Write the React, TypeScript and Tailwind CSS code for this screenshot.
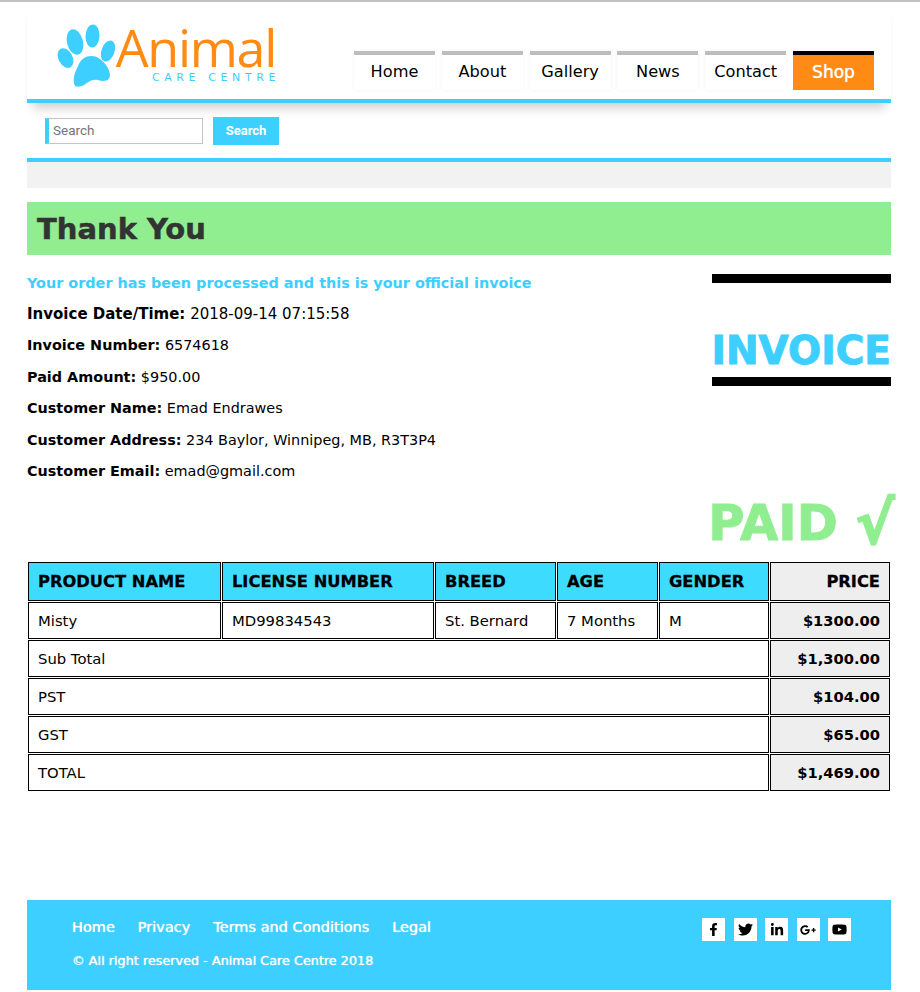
import { FaFacebookF, FaTwitter, FaLinkedinIn, FaGooglePlusG, FaYoutube } from "react-icons/fa";

const tabs = ["Home", "About", "Gallery", "News", "Contact"];
const info: [string, string][] = [
  ["Invoice Date/Time:", "2018-09-14 07:15:58"],
  ["Invoice Number:", "6574618"],
  ["Paid Amount:", "$950.00"],
  ["Customer Name:", "Emad Endrawes"],
  ["Customer Address:", "234 Baylor, Winnipeg, MB, R3T3P4"],
  ["Customer Email:", "emad@gmail.com"],
];
const heads = ["PRODUCT NAME", "LICENSE NUMBER", "BREED", "AGE", "GENDER"];
const item = ["Misty", "MD99834543", "St. Bernard", "7 Months", "M"];
const totals = [
  ["Sub Total", "$1,300.00"],
  ["PST", "$104.00"],
  ["GST", "$65.00"],
  ["TOTAL", "$1,469.00"],
];
const socials = [
  { I: FaFacebookF, s: 13 },
  { I: FaTwitter, s: 15 },
  { I: FaLinkedinIn, s: 14 },
  { I: FaGooglePlusG, s: 16 },
  { I: FaYoutube, s: 15 },
];

function Paw() {
  return (
    <svg width="63" height="66" viewBox="55 22 63 66" fill="#3dcfff" className="shrink-0">
      <ellipse cx="65.5" cy="57" rx="7" ry="10.5" transform="rotate(-28 65.5 57)" />
      <ellipse cx="75" cy="41" rx="8" ry="13" transform="rotate(-14 75 41)" />
      <ellipse cx="92.5" cy="35" rx="7" ry="11.5" transform="rotate(3 92.5 35)" />
      <ellipse cx="108" cy="50" rx="6.5" ry="11" transform="rotate(20 108 50)" />
      <path d="M75 85C72 78 75 71 78 65C81 58 85 55 92 55C100 55 110 66 110 74C110 80 104 81 98 79C90 78 88 82 84 84C80 86 77 86 75 85Z" />
    </svg>
  );
}

export default function App() {
  return (
    <div className="w-[920px] h-[992px] bg-white border-t-2 border-[#c2c2c2] font-['DejaVu_Sans',Verdana,sans-serif] text-[14.4px] text-black overflow-hidden">
      <div className="ml-[27px] w-[864px]">
        <header className="h-[101px] border-b-4 border-[#3dcfff] shadow-[0_11px_10px_-6px_rgba(0,0,0,0.2)] flex justify-between pl-[28px] pr-[17px] bg-white">
          <div className="flex pt-[21px] h-[90px]">
            <Paw />
            <div className="flex flex-col items-end -ml-[3px] w-[162px]">
              <span className="font-['Open_Sans',sans-serif] text-[52px] leading-[48px] tracking-[-1.3px] text-[#ff8a14] pr-[1px]">Animal</span>
              <span className="text-[11px] leading-[12px] tracking-[4.6px] text-[#3dcfff] mt-[1px] -mr-[3px]">CARE CENTRE</span>
            </div>
          </div>
          <nav className="flex gap-[6.8px] pt-[49px]">
            {tabs.map((t) => (
              <a key={t} className="w-[81px] h-[39px] border-t-4 border-[#bdbdbd] bg-white shadow-[0_0_4px_rgba(0,0,0,0.05)] flex items-center justify-center text-[16.2px]">{t}</a>
            ))}
            <a className="w-[81px] h-[39px] border-t-4 border-black bg-[#ff8a14] text-white [text-shadow:0_0_1px_white] flex items-center justify-center text-[17px]">Shop</a>
          </nav>
        </header>

        <div className="h-[59px] border-b-4 border-[#3dcfff] flex items-start gap-[10px] pl-[18px] pt-[14px] font-['Roboto',sans-serif] text-[13.5px]">
          <input
            placeholder="Search"
            className="w-[158px] h-[26px] mt-[1px] border border-[#c4c4c4] border-l-4 border-l-[#3dcfff] pl-[4px] pb-[2px] placeholder:text-[#757575] outline-none"
          />
          <button className="w-[66px] h-[28px] bg-[#3dcfff] text-white font-bold text-[13px]">Search</button>
        </div>

        <div className="h-[26px] bg-[#f2f2f2]" />

        <h1 className="mt-[14px] h-[53px] bg-[#90ee90] pl-[10px] pt-[2px] flex items-center text-[29px] leading-[55px] font-bold text-[#333] [-webkit-text-stroke:0.5px_#333]">Thank You</h1>

        <div className="flex justify-between">
          <div className="pt-[12px]">
            <p className="font-bold text-[#3dcfff] h-[31px] leading-[32px]">Your order has been processed and this is your official invoice</p>
            {info.map(([a, b], i) => (
              <p key={a} className={i === 0 ? "h-[31.4px] leading-[32px] text-[15px]" : "h-[31.4px] leading-[32px]"}><b>{a}</b> {b}</p>
            ))}
          </div>
          <div className="w-[179px] mt-[19px] h-[112px] border-y-[9px] border-black flex items-end justify-end">
            <span className="text-[39px] leading-[52px] font-bold text-[#3dcfff] whitespace-nowrap [-webkit-text-stroke:1px_#3dcfff]">INVOICE</span>
          </div>
        </div>

        <div className="flex justify-end items-center h-[75px] -mr-[3.5px] text-[#90ee90] font-bold whitespace-nowrap [-webkit-text-stroke:1px_#90ee90]">
          <span className="text-[49.5px] leading-[75px]">PAID</span>
          <span className="text-[58px] leading-[75px] ml-[18px] [-webkit-text-stroke:2px_#90ee90]">√</span>
        </div>

        <table className="w-[864px] table-fixed border-separate border-spacing-[1px]">
          <colgroup>
            <col className="w-[193px]" />
            <col className="w-[212px]" />
            <col className="w-[121px]" />
            <col className="w-[101px]" />
            <col className="w-[110px]" />
            <col />
          </colgroup>
          <thead>
            <tr className="h-[39px]">
              {heads.map((h) => (
                <th key={h} className="border border-black bg-[#3ddcff] text-left font-bold pl-[9px] text-[16.3px] whitespace-nowrap [-webkit-text-stroke:0.3px_black]">{h}</th>
              ))}
              <th className="border border-black bg-[#eeeeee] text-right font-bold pr-[9px] text-[16.3px] [-webkit-text-stroke:0.3px_black]">PRICE</th>
            </tr>
          </thead>
          <tbody>
            <tr className="h-[37px]">
              {item.map((c) => (
                <td key={c} className="border border-black pl-[9px] text-[14.8px]">{c}</td>
              ))}
              <td className="border border-black bg-[#eeeeee] text-right font-bold pr-[9px] text-[14.7px]">$1300.00</td>
            </tr>
            {totals.map(([a, b]) => (
              <tr key={a} className="h-[37px]">
                <td colSpan={5} className="border border-black pl-[9px] text-[14.8px]">{a}</td>
                <td className="border border-black bg-[#eeeeee] text-right font-bold pr-[9px] text-[14.7px]">{b}</td>
              </tr>
            ))}
          </tbody>
        </table>

        <footer className="mt-[108px] h-[90px] bg-[#3dcfff] text-white flex justify-between pl-[45px] pr-[40px] [text-shadow:0_0_1px_white]">
          <div className="pt-[18px]">
            <div className="flex gap-[23px] text-[14.5px] leading-[18px]">
              <a>Home</a>
              <a>Privacy</a>
              <a>Terms and Conditions</a>
              <a>Legal</a>
            </div>
            <p className="mt-[16px] text-[12.8px] leading-[18px]">© All right reserved - Animal Care Centre 2018</p>
          </div>
          <div className="flex gap-[8.5px] pt-[18px]">
            {socials.map(({ I, s }, i) => (
              <span key={i} className="w-[23px] h-[23px] bg-white text-black flex items-center justify-center">
                <I size={s} />
              </span>
            ))}
          </div>
        </footer>
      </div>
    </div>
  );
}
